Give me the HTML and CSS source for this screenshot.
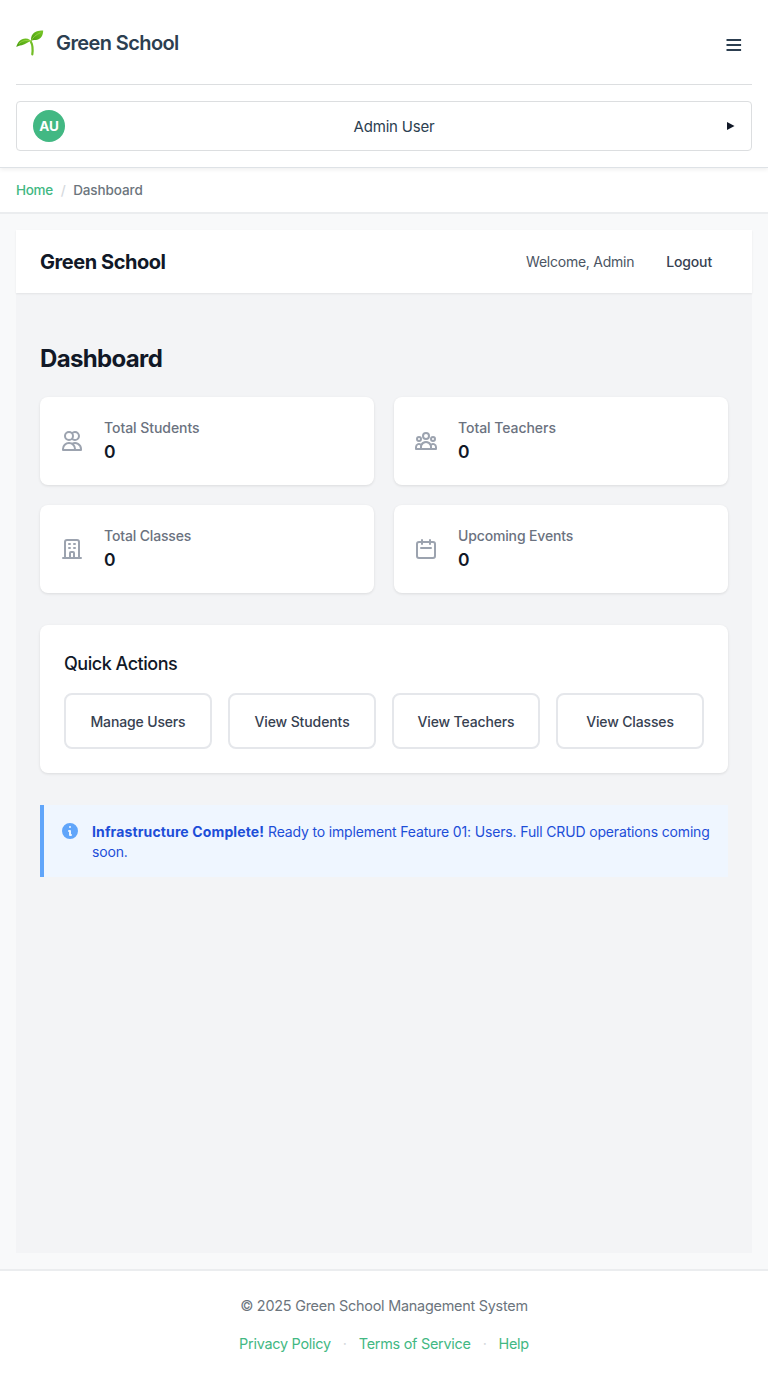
FILE: index.html
```html
<!DOCTYPE html>
<html lang="en">
<head>
<meta charset="utf-8">
<title>Green School</title>
<link rel="stylesheet" href="styles.css">
</head>
<body>
<header class="header">
  <div class="header-top">
    <a class="brand">
      <svg class="brand-icon" width="28" height="28" viewBox="0 0 28 28">
        <defs><linearGradient id="leaf" x1="0" y1="1" x2="1" y2="0"><stop offset="0" stop-color="#4a9b12"/><stop offset=".55" stop-color="#62b51b"/><stop offset="1" stop-color="#7ac829"/></linearGradient></defs>
        <path d="M15 14c1.700 3 1.900 7.500 1.300 12.400" fill="none" stroke="#72bd25" stroke-width="2.2" stroke-linecap="round"/>
        <path d="M15.3 13.100c-3 .4-5.700 3.700-9.500 4.100C3.200 17.600 1.600 18.300 .3 19.100 1.500 14.300 4.500 10.400 9.800 10.500c3 .1 4.300 1.400 5.500 2.600z" fill="url(#leaf)"/>
        <path d="M15.200 13.100C14.400 7.900 17.300 4.300 22 3.100c2.300-.6 4.200-.4 5.200-.5-.2 4.200-1.300 7.500-5.100 8.900-2.600.9-5.200-.1-6.900 1.600z" fill="url(#leaf)"/>
        <path d="M3 15.800c3-3.200 7-4 12.200-2.800 1.500-3.600 4.500-6.200 9.300-8.300" fill="none" stroke="#99d548" stroke-width=".8"/>
      </svg>
      <span class="brand-name">Green School</span>
    </a>
    <svg class="menu" width="16" height="14" viewBox="0 0 16 14"><path d="M.5 2h14.600M.5 7h14.600M.5 12h14.600" stroke="#2c3e50" stroke-width="2.2"/></svg>
  </div>
  <div class="user">
    <span class="avatar">AU</span>
    <span class="user-name">Admin User</span>
    <svg width="8" height="8" viewBox="0 0 8 8"><path d="M0 0l7.500 4L0 8z" fill="#111827"/></svg>
  </div>
</header>
<nav class="crumbs"><a class="crumb-link">Home</a><span class="crumb-sep">/</span><span class="crumb-now">Dashboard</span></nav>
<main class="main">
  <div class="app">
    <div class="appbar">
      <h1 class="app-title">Green School</h1>
      <div class="app-user"><span class="welcome">Welcome, Admin</span><span class="logout">Logout</span></div>
    </div>
    <div class="content">
      <h2 class="page-title">Dashboard</h2>
      <div class="stats">
        <div class="stat">
          <svg class="stat-icon" viewBox="0 0 24 24"><path d="M12 4.354a4 4 0 110 5.292M15 21H3v-1a6 6 0 0112 0v1zm0 0h6v-1a6 6 0 00-9-5.197M13 7a4 4 0 11-8 0 4 4 0 018 0z"/></svg>
          <div><div class="stat-label">Total Students</div><div class="stat-value">0</div></div>
        </div>
        <div class="stat">
          <svg class="stat-icon" viewBox="0 0 24 24"><path d="M17 20h5v-2a3 3 0 00-5.356-1.857M17 20H7m10 0v-2c0-.656-.126-1.283-.356-1.857M7 20H2v-2a3 3 0 015.356-1.857M7 20v-2c0-.656.126-1.283.356-1.857m0 0a5.002 5.002 0 019.288 0M15 7a3 3 0 11-6 0 3 3 0 016 0zm6 3a2 2 0 11-4 0 2 2 0 014 0zM7 10a2 2 0 11-4 0 2 2 0 014 0z"/></svg>
          <div><div class="stat-label">Total Teachers</div><div class="stat-value">0</div></div>
        </div>
        <div class="stat">
          <svg class="stat-icon" viewBox="0 0 24 24"><path d="M19 21V5a2 2 0 00-2-2H7a2 2 0 00-2 2v16m14 0h2m-2 0h-5m-9 0H3m2 0h5M9 7h1m-1 4h1m4-4h1m-1 4h1m-5 10v-5a1 1 0 011-1h2a1 1 0 011 1v5m-4 0h4"/></svg>
          <div><div class="stat-label tight">Total Classes</div><div class="stat-value">0</div></div>
        </div>
        <div class="stat">
          <svg class="stat-icon" viewBox="0 0 24 24"><path d="M8 7V3m8 4V3m-9 8h10M5 21h14a2 2 0 002-2V7a2 2 0 00-2-2H5a2 2 0 00-2 2v12a2 2 0 002 2z"/></svg>
          <div><div class="stat-label tight">Upcoming Events</div><div class="stat-value">0</div></div>
        </div>
      </div>
      <section class="quick">
        <h3 class="quick-title">Quick Actions</h3>
        <div class="actions">
          <a class="action tight">Manage Users</a><a class="action">View Students</a><a class="action tight">View Teachers</a><a class="action tight">View Classes</a>
        </div>
      </section>
      <div class="notice">
        <svg class="notice-icon" width="20" height="20" viewBox="0 0 20 20"><path fill="#60a5fa" fill-rule="evenodd" clip-rule="evenodd" d="M18 10a8 8 0 11-16 0 8 8 0 0116 0zm-7-4a1 1 0 11-2 0 1 1 0 012 0zM9 9a1 1 0 000 2v3a1 1 0 001 1h1a1 1 0 100-2v-3a1 1 0 00-1-1H9z"/></svg>
        <p class="notice-text"><strong>Infrastructure Complete!</strong> Ready to implement Feature 01: Users. Full CRUD operations coming soon.</p>
      </div>
    </div>
  </div>
</main>
<footer class="footer">
  <p class="copy">© 2025 Green School Management System</p>
  <div class="links"><a>Privacy Policy</a><span class="dot">·</span><a>Terms of Service</a><span class="dot">·</span><a>Help</a></div>
</footer>
</body>
</html>
```
FILE: styles.css
```css
* { box-sizing: border-box; margin: 0; }
body { font-family: Inter, "Liberation Sans", sans-serif; font-size: 14px; line-height: 20px; color: #111827; background: #f8f9fa; min-height: 1380px; display: flex; flex-direction: column; }
.header { height: 168px; padding: 0 16px; background: #fff; border-bottom: 1px solid #dee2e6; box-shadow: 0 2px 4px rgba(0,0,0,.06); position: relative; }
.header-top { height: 85px; display: flex; justify-content: space-between; align-items: center; border-bottom: 1px solid #dcdee0; padding-right: 10px; }
.brand { display: flex; align-items: center; gap: 12px; }
.brand-name { padding-top: 2px; font-size: 20px; font-weight: 600; letter-spacing: -.6px; color: #2c3e50; }
.menu { margin-top: 6px; }
.user { margin-top: 16px; height: 50px; border: 1px solid #dcdee0; border-radius: 4px; padding: 0 16px; display: flex; align-items: center; justify-content: space-between; }
.avatar { width: 32px; height: 32px; border-radius: 50%; background: #42b883; color: #fff; font-weight: 700; font-size: 13.500px; display: flex; align-items: center; justify-content: center; }
.user-name { padding: 2px 4px 0 0; font-size: 15px; color: #2c3e50; letter-spacing: -.2px; }
.crumbs { height: 46px; padding: 0 16px; background: #fff; border-bottom: 2px solid #ebedef; display: flex; align-items: center; gap: 8px; font-size: 13.500px; font-weight: 500; letter-spacing: -.1px; }
.crumb-link { color: #42b883; letter-spacing: -.35px; }
.crumb-sep { color: #d5d9dd; margin-right: -.5px; }
.crumb-now { color: #6c757d; }
.main { flex: 1; padding: 16px; display: flex; }
.app { flex: 1; background: #f3f4f6; }
.appbar { height: 63px; padding: 0 40px 0 24px; background: #fff; box-shadow: 0 1px 2px rgba(0,0,0,.07); display: flex; align-items: center; justify-content: space-between; }
.app-title { font-size: 20px; line-height: 28px; font-weight: 700; letter-spacing: -.45px; }
.app-user { display: flex; gap: 32px; padding-top: 1px; }
.welcome { color: #4b5563; letter-spacing: -.25px; }
.logout { color: #374151; font-weight: 500; letter-spacing: -.15px; }
.content { padding: 50px 24px 48px; }
.page-title { font-size: 24px; line-height: 32px; font-weight: 700; letter-spacing: -.65px; margin-bottom: 22px; }
.stats { display: grid; grid-template-columns: 1fr 1fr; gap: 20px; }
.stat { height: 88px; background: #fff; border-radius: 8px; box-shadow: 0 1px 3px rgba(0,0,0,.1); padding: 21px 20px 19px; display: flex; align-items: center; gap: 20px; }
.stat-icon { width: 24px; height: 24px; margin-top: -2px; fill: none; stroke: #9ca3af; stroke-width: 2; stroke-linecap: round; stroke-linejoin: round; }
.stat-label { color: #6b7280; font-weight: 500; letter-spacing: -.05px; }
.stat-value { font-size: 17.500px; line-height: 28px; font-weight: 600; }
.quick { margin-top: 32px; height: 148px; background: #fff; border-radius: 8px; box-shadow: 0 1px 3px rgba(0,0,0,.1); padding: 24px; }
.quick-title { font-size: 18px; line-height: 30px; font-weight: 500; letter-spacing: -.48px; margin-bottom: 14px; }
.actions { display: grid; grid-template-columns: repeat(4, 1fr); gap: 16px; }
.action { height: 56px; padding-top: 1px; border: 2px solid #e5e7eb; border-radius: 8px; color: #374151; font-weight: 500; letter-spacing: -.1px; display: flex; align-items: center; justify-content: center; }
.tight { letter-spacing: -.15px; }
.notice { margin-top: 32px; height: 72px; border-left: 4px solid #60a5fa; background: #eff6ff; padding: 17px 16px 15px; display: flex; gap: 12px; }
.notice-icon { flex: none; margin-top: -1px; }
.notice-text { color: #1d4ed8; letter-spacing: -.155px; }
.notice-text strong { letter-spacing: .13px; }
.footer { height: 111px; background: #fff; border-top: 2px solid #ebedef; padding-top: 25px; text-align: center; }
.copy { color: #6c757d; font-size: 14.400px; letter-spacing: -.23px; }
.links { margin-top: 18px; display: flex; justify-content: center; gap: 12px; color: #42b883; font-size: 14.400px; letter-spacing: -.25px; }
.dot { color: #d5d9dd; }
```
